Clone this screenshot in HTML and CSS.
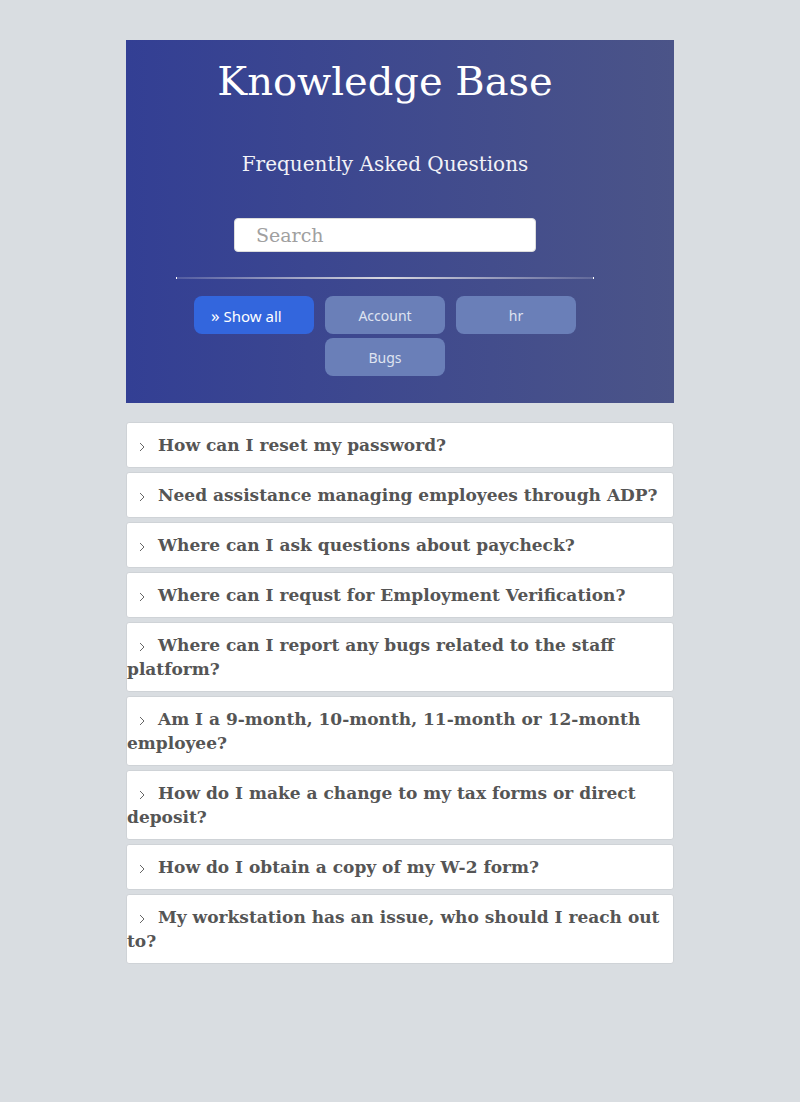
FILE: index.html
```html
<!DOCTYPE html>
<html>
<head>
<meta charset="utf-8">
<link rel="stylesheet" href="styles.css">
</head>
<body>
<div class="page">
  <header class="hero">
    <div class="hero-inner">
      <h1 class="title">Knowledge Base</h1>
      <h2 class="subtitle">Frequently Asked Questions</h2>
      <input class="search" type="text" placeholder="Search">
      <hr class="divider">
      <div class="filters">
        <button class="chip active"><span class="raquo">»</span> Show all</button>
        <button class="chip">Account</button>
        <button class="chip">hr</button>
        <button class="chip">Bugs</button>
      </div>
    </div>
  </header>
  <div class="faq">
    <div class="item"><svg class="chev" width="6" height="10" viewBox="0 0 6 10"><path d="M1 1 L5 5 L1 9" fill="none" stroke="#555" stroke-width="0.9"/></svg>How can I reset my password?</div>
    <div class="item"><svg class="chev" width="6" height="10" viewBox="0 0 6 10"><path d="M1 1 L5 5 L1 9" fill="none" stroke="#555" stroke-width="0.9"/></svg>Need assistance managing employees through ADP?</div>
    <div class="item"><svg class="chev" width="6" height="10" viewBox="0 0 6 10"><path d="M1 1 L5 5 L1 9" fill="none" stroke="#555" stroke-width="0.9"/></svg>Where can I ask questions about paycheck?</div>
    <div class="item"><svg class="chev" width="6" height="10" viewBox="0 0 6 10"><path d="M1 1 L5 5 L1 9" fill="none" stroke="#555" stroke-width="0.9"/></svg>Where can I requst for Employment Verification?</div>
    <div class="item"><svg class="chev" width="6" height="10" viewBox="0 0 6 10"><path d="M1 1 L5 5 L1 9" fill="none" stroke="#555" stroke-width="0.9"/></svg>Where can I report any bugs related to the staff platform?</div>
    <div class="item"><svg class="chev" width="6" height="10" viewBox="0 0 6 10"><path d="M1 1 L5 5 L1 9" fill="none" stroke="#555" stroke-width="0.9"/></svg>Am I a 9-month, 10-month, 11-month or 12-month employee?</div>
    <div class="item"><svg class="chev" width="6" height="10" viewBox="0 0 6 10"><path d="M1 1 L5 5 L1 9" fill="none" stroke="#555" stroke-width="0.9"/></svg>How do I make a change to my tax forms or direct deposit?</div>
    <div class="item"><svg class="chev" width="6" height="10" viewBox="0 0 6 10"><path d="M1 1 L5 5 L1 9" fill="none" stroke="#555" stroke-width="0.9"/></svg>How do I obtain a copy of my W-2 form?</div>
    <div class="item"><svg class="chev" width="6" height="10" viewBox="0 0 6 10"><path d="M1 1 L5 5 L1 9" fill="none" stroke="#555" stroke-width="0.9"/></svg>My workstation has an issue, who should I reach out to?</div>
  </div>
</div>
</body>
</html>
```
FILE: styles.css
```css
html, body {
  margin: 0;
  padding: 0;
  background: #d9dde1;
  font-family: "DejaVu Serif", serif;
}
.page {
  width: 548px;
  margin: 40px auto 0;
  padding-bottom: 40px;
}
.hero {
  background: linear-gradient(to right, #333f94, #4b5488);
  height: 363px;
  box-sizing: border-box;
}
.hero-inner {
  width: 518px;
  display: flex;
  flex-direction: column;
  align-items: center;
}
.title {
  margin: 16px 0 0;
  font-size: 40px;
  font-weight: normal;
  line-height: 50px;
  color: #fff;
}
.subtitle {
  margin: 46px 0 0;
  font-size: 20px;
  font-weight: normal;
  line-height: 24px;
  color: #f2f2f7;
}
.search {
  margin-top: 42px;
  width: 302px;
  height: 34px;
  box-sizing: border-box;
  border: 1px solid #dcdcdc;
  border-radius: 4px;
  padding: 0 0 0 21px;
  font-family: "DejaVu Serif", serif;
  font-size: 19px;
  color: #333;
  background: #fff;
  outline: none;
}
.search::placeholder {
  color: #a0a0a0;
}
.divider {
  margin: 25px 0 0;
  width: 418px;
  height: 2px;
  border: 0;
  border-left: 1px solid #fff;
  border-right: 1px solid #fff;
  box-sizing: border-box;
  background: linear-gradient(to right, rgba(200,200,220,0.2), #d8d8e0 50%, rgba(200,200,220,0.2));
}
.filters {
  margin-top: 17px;
  width: 382px;
  display: flex;
  flex-wrap: wrap;
  justify-content: center;
  column-gap: 11px;
  row-gap: 4px;
}
.chip {
  width: 120px;
  height: 38px;
  border: 0;
  border-radius: 8px;
  background: #6a7fb8;
  color: #dfe3f0;
  font-family: "Noto Sans", sans-serif;
  font-size: 14px;
  padding: 0;
  text-align: center;
}
.chip.active {
  background: #3366dd;
  color: #fff;
  text-align: left;
  padding-left: 17px;
  font-size: 15px;
}
.raquo {
  font-size: 17px;
}
.faq {
  margin-top: 19px;
  display: flex;
  flex-direction: column;
  gap: 4px;
}
.item {
  background: #fff;
  border: 1px solid #cfd3d7;
  border-radius: 3px;
  padding: 10px 0 10px;
  font-size: 17px;
  font-weight: bold;
  line-height: 24px;
  color: #555;
}
.chev {
  display: inline-block;
  vertical-align: -1px;
  margin: 0 13px 0 12px;
}
```
